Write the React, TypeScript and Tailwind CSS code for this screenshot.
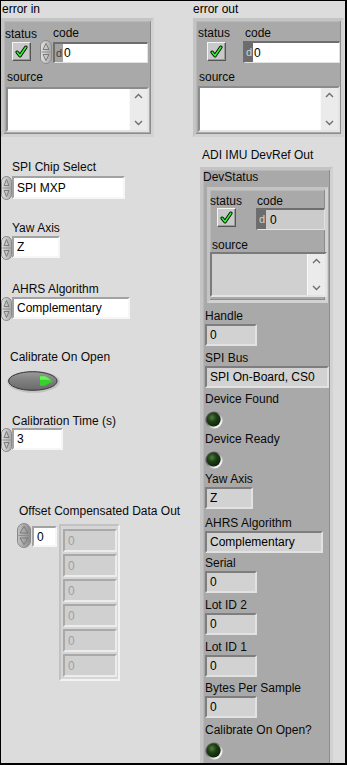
import React, { useId } from "react";

const clusterCls =
  "box-border border-[3px] border-t-[#c4c4c4] border-l-[#c4c4c4] border-r-[#d2d2d2] border-b-[#d2d2d2] bg-[#a9a9a9] shadow-[inset_-1px_-1px_0_#8c8c8c,inset_1px_1px_0_#b8b8b8]";

function Lbl({ children, className = "" }: { children: React.ReactNode; className?: string }) {
  return <div className={`h-[14px] leading-[14px] text-[12px] text-[#0a0a0a] whitespace-nowrap ${className}`}>{children}</div>;
}

function Box({ children, className = "", gray = false }: { children?: React.ReactNode; className?: string; gray?: boolean }) {
  const tone = gray
    ? "bg-[#d2d2d2] border-t-[#7e7e7e] border-l-[#7e7e7e] border-b-[#e2e2e2] border-r-[#e2e2e2]"
    : "bg-white border-t-[#a2a2a2] border-l-[#a2a2a2] border-b-[#f6f6f6] border-r-[#f6f6f6]";
  return (
    <div className={`box-border flex items-center border-2 pl-[3px] text-[12px] text-black whitespace-nowrap ${tone} ${className}`}>
      {children}
    </div>
  );
}

function Check({ className = "" }: { className?: string }) {
  return (
    <div
      className={`box-border w-[19px] h-[19px] flex items-center justify-center border border-t-[#f4f4f4] border-l-[#f4f4f4] border-b-[#555] border-r-[#555] bg-[#c9c9c9] shadow-[inset_-1px_-1px_0_#9a9a9a] ${className}`}
    >
      <svg width="13" height="13" viewBox="0 0 13 13">
        <path d="M2.2 7.2 L5 10.8 L10.8 2.2" fill="none" stroke="#000" strokeWidth="3.4" strokeLinecap="round" strokeLinejoin="round" />
        <path d="M2.2 7.2 L5 10.8 L10.8 2.2" fill="none" stroke="#2ef02e" strokeWidth="1.7" strokeLinecap="round" strokeLinejoin="round" />
      </svg>
    </div>
  );
}

function Spin({ w = 11, h = 24, dark = false, className = "" }: { w?: number; h?: number; dark?: boolean; className?: string }) {
  const id = useId();
  const m = w / 2;
  const half = h / 2;
  return (
    <svg width={w} height={h} viewBox={`0 0 ${w} ${h}`} className={`shrink-0 ${className}`}>
      <defs>
        <linearGradient id={id} x1="0" y1="0" x2="1" y2="0">
          <stop offset="0" stopColor={dark ? "#c4c4c4" : "#e2e2e2"} />
          <stop offset="1" stopColor={dark ? "#8a8a8a" : "#a8a8a8"} />
        </linearGradient>
      </defs>
      <rect x="0.5" y="0.5" width={w - 1} height={h - 1} rx={(w - 1) / 2} fill={`url(#${id})`} stroke="#8a8a8a" />
      <line x1="1.5" y1={half} x2={w - 1.5} y2={half} stroke="#8e8e8e" />
      <path d={`M${m} ${3.5} L${w - 3} ${half - 2.5} L3 ${half - 2.5} Z`} fill="none" stroke="#747474" strokeWidth="0.9" />
      <path d={`M${m} ${h - 3.5} L${w - 3} ${half + 2.5} L3 ${half + 2.5} Z`} fill="none" stroke="#747474" strokeWidth="0.9" />
    </svg>
  );
}

function Led({ className = "" }: { className?: string }) {
  const id = useId();
  return (
    <svg width="18" height="18" viewBox="0 0 18 18" className={className}>
      <defs>
        <linearGradient id={`${id}r`} x1="0" y1="0" x2="1" y2="1">
          <stop offset="0.35" stopColor="#5a5a5a" />
          <stop offset="0.75" stopColor="#f2f2f2" />
        </linearGradient>
        <radialGradient id={`${id}g`} cx="0.38" cy="0.35" r="0.7">
          <stop offset="0" stopColor="#4f7d40" />
          <stop offset="0.45" stopColor="#1d3f14" />
          <stop offset="1" stopColor="#0b1f07" />
        </radialGradient>
      </defs>
      <circle cx="9" cy="9" r="8.6" fill={`url(#${id}r)`} />
      <circle cx="8.6" cy="8.6" r="7" fill={`url(#${id}g)`} />
    </svg>
  );
}

function OvalButton({ className = "" }: { className?: string }) {
  const id = useId();
  return (
    <svg width="53" height="23" viewBox="0 0 53 23" className={className}>
      <defs>
        <linearGradient id={id} x1="0" y1="0" x2="0" y2="1">
          <stop offset="0" stopColor="#9a9a9a" />
          <stop offset="0.5" stopColor="#7e7e7e" />
          <stop offset="1" stopColor="#6a6a6a" />
        </linearGradient>
      </defs>
      <ellipse cx="26.5" cy="11.8" rx="26.2" ry="11" fill="#c2c2c2" />
      <ellipse cx="25.8" cy="11" rx="24.2" ry="9.3" fill={`url(#${id})`} stroke="#333" strokeWidth="1" />
      <path d="M33 6.3 L38 6.3 L46 11 L38 15.7 L33 15.7 Z" fill="#36d12f" />
      <path d="M33 6.3 L38 6.3 L44 9.8 L33 9.8 Z" fill="#6cf25a" />
    </svg>
  );
}

function Chevron({ up }: { up?: boolean }) {
  return (
    <svg width="9" height="6" viewBox="0 0 9 6">
      <path d={up ? "M1 5 L4.5 1.5 L8 5" : "M1 1 L4.5 4.5 L8 1"} fill="none" stroke="#6e6e6e" strokeWidth="1.4" />
    </svg>
  );
}

function TextArea({ className = "", gray = false }: { className?: string; gray?: boolean }) {
  const tone = gray ? "bg-[#d0d0d0] border-t-[#7a7a7a] border-l-[#7a7a7a]" : "bg-white border-t-[#8c8c8c] border-l-[#8c8c8c]";
  return (
    <div className={`box-border flex justify-end border-2 border-b-[#e4e4e4] border-r-[#e4e4e4] ${tone} ${className}`}>
      <div className="w-[18px] h-full flex flex-col items-center justify-between py-[4px] bg-[#ebebeb] border-l border-l-[#fafafa]">
        <Chevron up />
        <Chevron />
      </div>
    </div>
  );
}

function CodeField({ className = "", variant }: { className?: string; variant: "in" | "out" | "dev" }) {
  const d =
    variant === "in" ? "bg-[#a2a2a2] text-[#3c3c3c]" : "bg-[#6c6c6c] text-[#d2d2d2]";
  const v = variant === "dev" ? "bg-[#cbcbcb] pl-[4px]" : "bg-white pl-[1px]";
  return (
    <div className={`box-border flex border-t-2 border-l-2 border-b border-r border-t-[#6e6e6e] border-l-[#6e6e6e] border-b-[#e2e2e2] border-r-[#e2e2e2] ${className}`}>
      <div className={`w-[8px] flex items-center justify-center text-[11px] ${d}`}>d</div>
      <div className={`flex-1 flex items-center text-[12px] text-black ${v}`}>0</div>
    </div>
  );
}

type Item = { label: string; kind: "field" | "led"; w?: string; value?: string; mt: string };

const devItems: Item[] = [
  { label: "Handle", kind: "field", w: "w-[52px]", value: "0", mt: "mt-[6px]" },
  { label: "SPI Bus", kind: "field", w: "w-[124px]", value: "SPI On-Board, CS0", mt: "mt-[5px]" },
  { label: "Device Found", kind: "led", mt: "mt-[4px]" },
  { label: "Device Ready", kind: "led", mt: "mt-[3px]" },
  { label: "Yaw Axis", kind: "field", w: "w-[48px]", value: "Z", mt: "mt-[3px]" },
  { label: "AHRS Algorithm", kind: "field", w: "w-[118px]", value: "Complementary", mt: "mt-[7px]" },
  { label: "Serial", kind: "field", w: "w-[52px]", value: "0", mt: "mt-[3px]" },
  { label: "Lot ID 2", kind: "field", w: "w-[52px]", value: "0", mt: "mt-[5px]" },
  { label: "Lot ID 1", kind: "field", w: "w-[52px]", value: "0", mt: "mt-[5px]" },
  { label: "Bytes Per Sample", kind: "field", w: "w-[52px]", value: "0", mt: "mt-[4px]" },
  { label: "Calibrate On Open?", kind: "led", mt: "mt-[5px]" },
];

export default function App() {
  return (
    <div className="w-[347px] h-[765px] box-border overflow-hidden border-t border-l border-r-2 border-b-2 border-black bg-[#dcdcdc] font-['Liberation_Sans',Arial,sans-serif] text-[12px] text-black">
      {/* top row: error clusters */}
      <div className="flex items-start">
        <div>
          <div className="h-[17px] leading-[17px] pl-[1px] whitespace-nowrap">error in</div>
          <div className={`${clusterCls} w-[153px] h-[119px]`}>
            <div className="flex">
              <div className="ml-[1px] w-[35px]">
                <Lbl className="mt-[6px]">status</Lbl>
                <Check className="ml-[7px] mt-[1px]" />
              </div>
              <div>
                <Lbl className="ml-[13px] mt-[5px]">code</Lbl>
                <div className="flex items-start">
                  <Spin w={12} h={24} />
                  <CodeField variant="in" className="ml-[1px] mt-[2px] w-[95px] h-[21px]" />
                </div>
              </div>
            </div>
            <Lbl className="ml-[3px] mt-[6px]">source</Lbl>
            <TextArea className="ml-[2px] mt-[3px] w-[143px] h-[45px]" />
          </div>
        </div>

        <div className="ml-[39px]">
          <div className="h-[17px] leading-[17px] whitespace-nowrap">error out</div>
          <div className={`${clusterCls} w-[151px] h-[119px]`}>
            <div className="flex">
              <div className="ml-[2px] w-[45px]">
                <Lbl className="mt-[5px]">status</Lbl>
                <Check className="ml-[9px] mt-[2px]" />
              </div>
              <div>
                <Lbl className="ml-[2px] mt-[5px]">code</Lbl>
                <CodeField variant="out" className="mt-[1px] w-[97px] h-[22px]" />
              </div>
            </div>
            <Lbl className="ml-[3px] mt-[7px]">source</Lbl>
            <TextArea className="ml-[2px] mt-[2px] w-[142px] h-[46px]" />
          </div>
        </div>
      </div>

      {/* bottom row */}
      <div className="flex items-start">
        {/* left controls */}
        <div className="w-[199px]">
          <Lbl className="mt-[23px] ml-[11px]">SPI Chip Select</Lbl>
          <div className="flex items-start mt-[2px]">
            <Spin w={11} h={24} />
            <Box className="w-[113px] h-[23px]">SPI MXP</Box>
          </div>

          <Lbl className="mt-[21px] ml-[11px]">Yaw Axis</Lbl>
          <div className="flex items-start mt-[1px]">
            <Spin w={11} h={24} />
            <Box className="w-[48px] h-[22px]">Z</Box>
          </div>

          <Lbl className="mt-[22px] ml-[11px]">AHRS Algorithm</Lbl>
          <div className="flex items-start mt-[1px]">
            <Spin w={11} h={24} />
            <Box className="w-[118px] h-[22px]">Complementary</Box>
          </div>

          <Lbl className="mt-[29px] ml-[9px]">Calibrate On Open</Lbl>
          <OvalButton className="mt-[6px] ml-[6px] block" />

          <Lbl className="mt-[21px] ml-[11px]">Calibration Time (s)</Lbl>
          <div className="flex items-start">
            <Spin w={11} h={24} />
            <Box className="w-[51px] h-[22px]">3</Box>
          </div>

          <Lbl className="mt-[52px] ml-[18px]">Offset Compensated Data Out</Lbl>
          <div className="flex items-start mt-[5px] ml-[16px]">
            <Spin w={14} h={25} dark />
            <Box className="ml-[1px] mt-[3px] w-[25px] h-[21px] pl-[2px]">0</Box>
            <div className="ml-[2px] mt-[1px] w-[61px] h-[157px] box-border border-2 border-t-[#c2c2c2] border-l-[#c2c2c2] border-b-[#f2f2f2] border-r-[#f2f2f2] bg-[#d6d6d6] pt-[3px] pl-[2px] flex flex-col gap-[2px]">
              {[0, 1, 2, 3, 4, 5].map((i) => (
                <div
                  key={i}
                  className="box-border w-[54px] h-[23px] flex items-center pl-[3px] border-2 border-t-[#a9a9a9] border-l-[#a9a9a9] border-b-[#ececec] border-r-[#ececec] bg-[#d0d0d0] text-[12px] text-[#a0a0a0]"
                >
                  0
                </div>
              ))}
            </div>
          </div>
        </div>

        {/* right indicator cluster */}
        <div>
          <Lbl className="mt-[11px] ml-[2px]">ADI IMU DevRef Out</Lbl>
          <div className={`${clusterCls} mt-[5px] w-[133px] h-[600px]`}>
            <Lbl>DevStatus</Lbl>
            <div className={`${clusterCls} ml-[4px] mt-[3px] w-[121px] h-[116px]`}>
              <div className="flex">
                <div className="w-[46px]">
                  <Lbl className="mt-[4px]">status</Lbl>
                  <Check className="ml-[7px]" />
                </div>
                <div>
                  <Lbl className="ml-[1px] mt-[4px]">code</Lbl>
                  <CodeField variant="dev" className="w-[69px] h-[22px]" />
                </div>
              </div>
              <Lbl className="ml-[2px] mt-[8px]">source</Lbl>
              <TextArea gray className="w-[117px] h-[45px]" />
            </div>

            {devItems.map((it) => (
              <div key={it.label} className={`ml-[2px] ${it.mt}`}>
                <Lbl>{it.label}</Lbl>
                {it.kind === "field" ? (
                  <Box gray className={`mt-[1px] h-[22px] ${it.w}`}>
                    {it.value}
                  </Box>
                ) : (
                  <Led className="mt-[5px] block" />
                )}
              </div>
            ))}
          </div>
        </div>
      </div>
    </div>
  );
}
